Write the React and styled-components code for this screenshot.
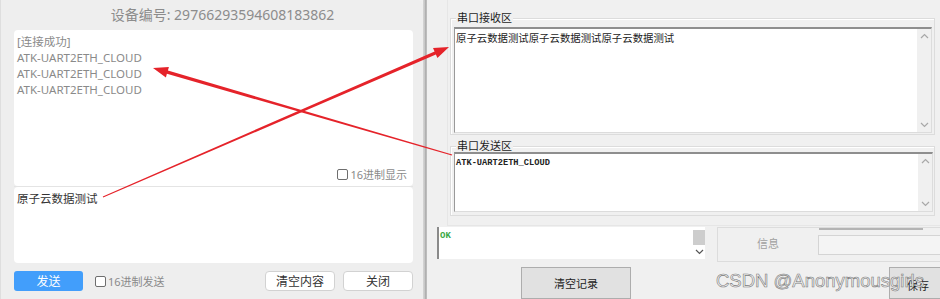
import React from "react";
import styled, { createGlobalStyle } from "styled-components";

const Global = createGlobalStyle`
  html, body { margin: 0; padding: 0; }
  body { font-family: "Noto Sans", "Noto Sans CJK SC", sans-serif; background: #f0f0f0; }
`;

const Page = styled.div`
  position: relative;
  width: 940px;
  height: 299px;
  display: flex;
  overflow: hidden;
  background: #f0f0f0;
`;

/* ---------- left: cloud client panel ---------- */
const LeftPanel = styled.div`
  width: 423px;
  flex-shrink: 0;
  box-sizing: border-box;
  padding: 0 10px 0 13px;
  background: #eeeeee;
  border-left: 1px solid #dedede;
  border-top-right-radius: 6px;
  display: flex;
  flex-direction: column;
`;

const DeviceTitle = styled.div`
  height: 30px;
  line-height: 30px;
  padding-left: 18px;
  text-align: center;
  font-size: 14px;
  color: #8c8c8c;
  white-space: nowrap;
`;

const WhiteBox = styled.div`
  background: #ffffff;
  border-radius: 4px;
  box-sizing: border-box;
  height: ${(p) => p.$h}px;
  padding: 4px 3px;
  display: flex;
  flex-direction: column;
`;

const LogLine = styled.div`
  font-size: 11.5px;
  line-height: 16px;
  color: ${(p) => (p.$dark ? "#333333" : "#8a8a8a")};
  white-space: nowrap;
`;

const HexToggle = styled.label`
  display: flex;
  align-items: center;
  gap: 2px;
  font-size: 11px;
  color: #8a8a8a;
  white-space: nowrap;
  align-self: ${(p) => (p.$end ? "flex-end" : "auto")};
  margin-top: ${(p) => (p.$end ? "auto" : "0")};
  margin-right: ${(p) => (p.$end ? "3px" : "0")};
`;

const CheckBox = styled.span`
  width: 9px;
  height: 9px;
  border: 1px solid #6e6e6e;
  border-radius: 2px;
  background: #fff;
`;

const Divider = styled.div`
  height: 1px;
  background: #e4e4e4;
`;

const ActionBar = styled.div`
  display: flex;
  align-items: center;
  padding-top: 8px;
  gap: 8px;
`;

const PrimaryButton = styled.button`
  width: 69px;
  height: 20px;
  border: none;
  border-radius: 3px;
  background: #429efb;
  color: #fff;
  font: inherit;
  font-size: 12px;
  padding: 0;
  margin-right: 4px;
`;

const OutlineButton = styled.button`
  width: 70px;
  height: 20px;
  border: 1px solid #d2d2d2;
  border-radius: 4px;
  background: #fff;
  color: #333;
  font: inherit;
  font-size: 12px;
  padding: 0;
`;

const Spacer = styled.div`
  flex: 1;
`;

const Splitter = styled.div`
  width: 4px;
  flex-shrink: 0;
  background: linear-gradient(to right, #d6d6d6 0%, #c4c4c4 50%, #9c9c9c 75%, #dcdcdc 100%);
`;

/* ---------- right: serial tool panel ---------- */
const RightPanel = styled.div`
  flex: 1;
  min-width: 0;
  overflow: hidden;
  display: flex;
  flex-direction: column;
  font-family: "Noto Sans CJK SC", "Noto Sans", sans-serif;
  font-size: 11px;
  color: #1e1e1e;
`;

const FrameArea = styled.div`
  margin-left: 20px;
  padding: 18px 5px 9px 2px;
  border-left: 1px solid #e6e6e6;
  border-bottom: 1px solid #e6e6e6;
  display: flex;
  flex-direction: column;
  gap: 11px;
`;

const GroupFrame = styled.fieldset`
  margin: 0;
  padding: ${(p) => p.$pad};
  border: 1px solid #dcdcdc;
  box-shadow: inset 1px 1px 0 #fff;
  position: relative;
  min-width: 0;
`;

const GroupLabel = styled.span`
  position: absolute;
  left: 5px;
  top: -9px;
  padding: 0 1px;
  line-height: 14px;
  background: #f0f0f0;
  font-size: 11px;
  color: #1e1e1e;
`;

const Sunken = styled.div`
  height: ${(p) => p.$h}px;
  box-sizing: border-box;
  background: #fff;
  border-top: 2px solid #8e8e8e;
  border-left: 1px solid #9a9a9a;
  border-right: 1px solid #dcdcdc;
  border-bottom: 1px solid #dcdcdc;
  display: flex;
`;

const SunkenText = styled.div`
  flex: 1;
  padding: 1px 1px;
  font-size: ${(p) => (p.$mono ? "8.7px" : "10.4px")};
  font-family: ${(p) => (p.$mono ? '"Liberation Mono", monospace' : '"Noto Sans CJK SC", sans-serif')};
  font-weight: ${(p) => (p.$mono ? 700 : 400)};
  line-height: 16px;
  color: #222;
  white-space: nowrap;
`;

const ScrollTrack = styled.div`
  width: 14px;
  background: #f0f0f0;
  display: flex;
  flex-direction: column;
  justify-content: space-between;
  align-items: center;
  padding: 4px 0;
`;

const Chevron = ({ up, color = "#a8a8a8" }) => (
  <svg width="9" height="6" viewBox="0 0 9 6">
    <path d={up ? "M1 5 L4.5 1.5 L8 5" : "M1 1 L4.5 4.5 L8 1"} fill="none" stroke={color} strokeWidth="1.2" />
  </svg>
);

const StatusRow = styled.div`
  display: flex;
  margin-top: 1px;
  padding-left: 10px;
  gap: 12px;
  height: 36px;
`;

const LogBox = styled.div`
  width: 268px;
  flex-shrink: 0;
  height: 32px;
  background: #fff;
  border-left: 2px solid #8a8a8a;
  box-sizing: border-box;
  display: flex;
`;

const OkText = styled.div`
  flex: 1;
  font-family: "Liberation Mono", monospace;
  font-weight: 700;
  font-size: 9px;
  color: #3aa845;
  padding: 4px 1px;
`;

const LogScroll = styled.div`
  width: 12px;
  display: flex;
  flex-direction: column;
  align-items: center;
  padding-top: 3px;
  gap: 4px;
`;

const Thumb = styled.div`
  width: 12px;
  height: 15px;
  background: #cdcdcd;
`;

const InfoGroup = styled.div`
  flex: 1;
  border: 1px solid #dcdcdc;
  border-right: none;
  display: flex;
  align-items: flex-start;
`;

const InfoLabel = styled.div`
  width: 100px;
  text-align: center;
  padding-top: 7px;
  color: #a0a0a0;
  font-size: 11px;
`;

const InfoField = styled.div`
  flex: 1;
  display: flex;
  flex-direction: column;
  gap: 5px;
`;

const Ruler = styled.div`
  width: 104px;
  height: 2px;
  background: #b4b4b4;
  margin-left: 1px;
`;

const InfoInput = styled.div`
  height: 18px;
  border: 1px solid #d4d4d4;
  border-right: none;
  background: #f4f4f4;
`;

const ButtonRow = styled.div`
  display: flex;
  padding-top: 5px;
  padding-left: 94px;
  gap: 258px;
`;

const WinButton = styled.button`
  width: ${(p) => p.$w}px;
  height: 32px;
  background: #e1e1e1;
  border: 1px solid #adadad;
  font: inherit;
  font-size: 11px;
  color: #1e1e1e;
  padding: ${(p) => p.$pad || "0"};
  text-align: ${(p) => p.$align || "center"};
  flex-shrink: 0;
`;

const Watermark = styled.div`
  position: absolute;
  left: 716px;
  top: 270px;
  font-family: "Liberation Sans", Arial, sans-serif;
  font-size: 18.5px;
  color: #f4f4f4;
  -webkit-text-stroke: 0.6px #7a7a7a;
  white-space: nowrap;
  pointer-events: none;
`;

const Overlay = styled.svg`
  position: absolute;
  left: 0;
  top: 0;
  pointer-events: none;
`;

function taperArrow(sx, sy, tx, ty, w0, w1, headLen, headHalf) {
  const dx = tx - sx;
  const dy = ty - sy;
  const len = Math.hypot(dx, dy);
  const ux = dx / len;
  const uy = dy / len;
  const nx = -uy;
  const ny = ux;
  const bx = tx - ux * headLen;
  const by = ty - uy * headLen;
  const pts = [
    [sx + nx * w0, sy + ny * w0],
    [bx + nx * w1, by + ny * w1],
    [bx + nx * headHalf, by + ny * headHalf],
    [tx, ty],
    [bx - nx * headHalf, by - ny * headHalf],
    [bx - nx * w1, by - ny * w1],
    [sx - nx * w0, sy - ny * w0],
  ];
  return pts.map((p) => p.map((v) => v.toFixed(1)).join(",")).join(" ");
}

export default function App() {
  return (
    <>
      <Global />
      <Page>
        <LeftPanel>
          <DeviceTitle>设备编号: 29766293594608183862</DeviceTitle>
          <WhiteBox $h={156}>
            <LogLine>[连接成功]</LogLine>
            <LogLine>ATK-UART2ETH_CLOUD</LogLine>
            <LogLine>ATK-UART2ETH_CLOUD</LogLine>
            <LogLine>ATK-UART2ETH_CLOUD</LogLine>
            <HexToggle $end>
              <CheckBox />
              16进制显示
            </HexToggle>
          </WhiteBox>
          <Divider />
          <WhiteBox $h={76}>
            <LogLine $dark>原子云数据测试</LogLine>
          </WhiteBox>
          <ActionBar>
            <PrimaryButton>发送</PrimaryButton>
            <HexToggle>
              <CheckBox />
              16进制发送
            </HexToggle>
            <Spacer />
            <OutlineButton>清空内容</OutlineButton>
            <OutlineButton>关闭</OutlineButton>
          </ActionBar>
        </LeftPanel>
        <Splitter />
        <RightPanel>
          <FrameArea>
            <GroupFrame $pad="8px 2px 1px 3px">
              <GroupLabel>串口接收区</GroupLabel>
              <Sunken $h={106}>
                <SunkenText>原子云数据测试原子云数据测试原子云数据测试</SunkenText>
                <ScrollTrack>
                  <Chevron up />
                  <Chevron />
                </ScrollTrack>
              </Sunken>
            </GroupFrame>
            <GroupFrame $pad="5px 1px 3px 3px">
              <GroupLabel>串口发送区</GroupLabel>
              <Sunken $h={60}>
                <SunkenText $mono>ATK-UART2ETH_CLOUD</SunkenText>
                <ScrollTrack>
                  <Chevron up />
                  <Chevron />
                </ScrollTrack>
              </Sunken>
            </GroupFrame>
          </FrameArea>
          <StatusRow>
            <LogBox>
              <OkText>OK</OkText>
              <LogScroll>
                <Thumb />
                <Chevron color="#555" />
              </LogScroll>
            </LogBox>
            <InfoGroup>
              <InfoLabel>信息</InfoLabel>
              <InfoField>
                <Ruler />
                <InfoInput />
              </InfoField>
            </InfoGroup>
          </StatusRow>
          <ButtonRow>
            <WinButton $w={110}>清空记录</WinButton>
            <WinButton $w={60} $align="left" $pad="4px 0 0 17px">保存</WinButton>
          </ButtonRow>
        </RightPanel>
        <Watermark>CSDN @Anonymousgirls</Watermark>
        <Overlay width="940" height="299" viewBox="0 0 940 299">
          <polygon fill="#e5232a" points={taperArrow(103, 197, 449, 47, 0.6, 1.6, 15, 5.5)} />
          <polygon fill="#e5232a" points={taperArrow(452, 155, 153, 68, 0.6, 1.7, 15, 5.5)} />
        </Overlay>
      </Page>
    </>
  );
}
